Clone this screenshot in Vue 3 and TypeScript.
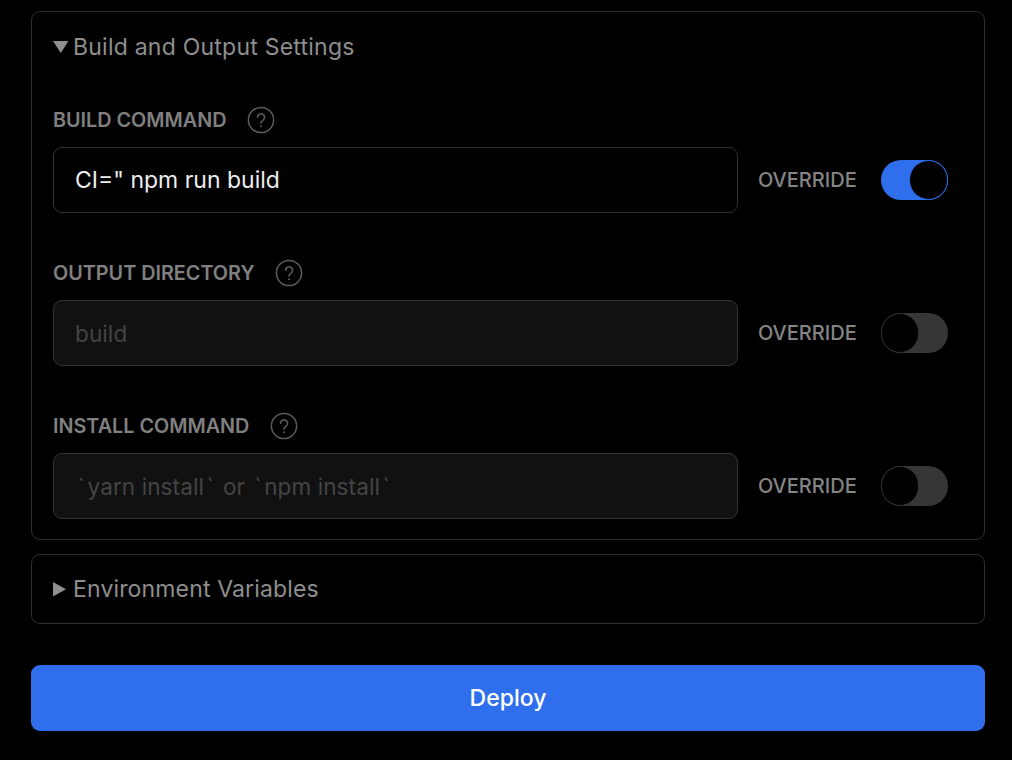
<script setup lang="ts">
interface Field {
  label: string;
  value: string;
  override: boolean;
}

const fields: Field[] = [
  { label: 'BUILD COMMAND', value: 'CI=" npm run build', override: true },
  { label: 'OUTPUT DIRECTORY', value: 'build', override: false },
  { label: 'INSTALL COMMAND', value: '`yarn install` or `npm install`', override: false },
];

// backticks get their own span, the placeholder renders them wider
const parts = (value: string) => value.split(/(`)/).filter(Boolean);
</script>

<template>
  <main class="page">
    <section class="panel settings">
      <h2 class="panel-title wide">
        <svg class="caret-down" width="16" height="12" viewBox="0 0 16 12"><path d="M0 0H15.5L7.75 12Z" /></svg>
        Build and Output Settings
      </h2>

      <div class="fields">
        <div v-for="field in fields" :key="field.label" class="field">
          <div class="label-row">
            <span class="label">{{ field.label }}</span>
            <svg class="help" width="28" height="28" viewBox="0 0 28 28" fill="none">
              <circle cx="14" cy="14" r="12.6" stroke="#5c5c5c" stroke-width="1.5" />
              <path d="M10.6 11.2a3.5 3.5 0 1 1 5.4 3c-1.3.8-2 1.4-2 2.9" stroke="#5c5c5c" stroke-width="1.6" stroke-linecap="round" />
              <circle cx="14" cy="20.3" r="1" fill="#5c5c5c" />
            </svg>
          </div>
          <div class="input-row">
            <div class="input" :class="{ disabled: !field.override }">
              <span v-for="(part, i) in parts(field.value)" :key="i" :class="{ tick: part === '`' }">{{ part }}</span>
            </div>
            <span class="override">OVERRIDE</span>
            <div class="toggle" :class="{ on: field.override }"><span class="knob"></span></div>
          </div>
        </div>
      </div>
    </section>

    <section class="panel env">
      <h2 class="panel-title">
        <svg class="caret-right" width="14" height="15" viewBox="0 0 14 15"><path d="M0 0L13 7.25L0 14.5Z" /></svg>
        Environment Variables
      </h2>
    </section>

    <button class="deploy" type="button">Deploy</button>
  </main>
</template>

<style>
html,
body {
  background: #000;
}
</style>

<style scoped>
.page {
  box-sizing: border-box;
  width: 1012px;
  height: 760px;
  padding: 11px 27px 0 31px;
  background: #000;
  font-family: Inter, "Liberation Sans", sans-serif;
  overflow: hidden;
}

.panel {
  box-sizing: border-box;
  border: 1px solid #2e2e2e;
  border-radius: 9px;
}

.settings {
  height: 529px;
  padding: 21px 21px 0;
}

.env {
  height: 70px;
  margin-top: 14px;
  padding: 20px 21px 0;
}

.panel-title {
  display: flex;
  align-items: center;
  height: 28px;
  margin: 0;
  font-size: 23px;
  font-weight: 400;
  letter-spacing: 0.15px;
  color: #8f8f8f;
  white-space: nowrap;
}

.panel-title.wide {
  letter-spacing: 0.23px;
}

.panel-title svg {
  flex: none;
  fill: #8f8f8f;
}

.caret-down {
  margin-right: 4px;
}

.caret-right {
  margin-right: 6px;
}

.fields {
  display: flex;
  flex-direction: column;
  gap: 46px;
  margin-top: 45px;
}

.label-row {
  display: flex;
  align-items: center;
  gap: 20.5px;
  height: 28px;
}

.label {
  font-size: 19.8px;
  font-weight: 600;
  color: #808080;
  white-space: nowrap;
}

.input-row {
  display: flex;
  align-items: center;
  margin-top: 13px;
}

.input {
  box-sizing: border-box;
  display: flex;
  align-items: center;
  width: 685px;
  height: 66px;
  padding: 0 21px;
  border: 1px solid #333;
  border-radius: 9px;
  font-size: 23px;
  color: #ededed;
  white-space: pre;
}

.input.disabled {
  background: #111;
  font-size: 22.5px;
  letter-spacing: 0.1px;
  color: #444;
}

.tick {
  margin: 0 2.6px;
}

.override {
  width: 99px;
  margin: 0 24px 0 20px;
  font-size: 20px;
  font-weight: 500;
  color: #858585;
  white-space: nowrap;
}

.toggle {
  box-sizing: border-box;
  display: flex;
  justify-content: flex-start;
  width: 67px;
  height: 40px;
  border-radius: 20px;
  background: #363636;
}

.toggle.on {
  justify-content: flex-end;
  background: #2f6fed;
}

.knob {
  box-sizing: border-box;
  width: 38px;
  height: 40px;
  border: 1px solid #333;
  border-radius: 20px;
  background: #000;
}

.toggle.on .knob {
  width: 39px;
  border: 1px solid #2f6fed;
}

.deploy {
  display: block;
  width: 954px;
  height: 66px;
  margin-top: 41px;
  padding: 0;
  border: 0;
  border-radius: 9px;
  background: #2f6fed;
  color: #fff;
  font-family: inherit;
  font-size: 23px;
  font-weight: 500;
}
</style>
